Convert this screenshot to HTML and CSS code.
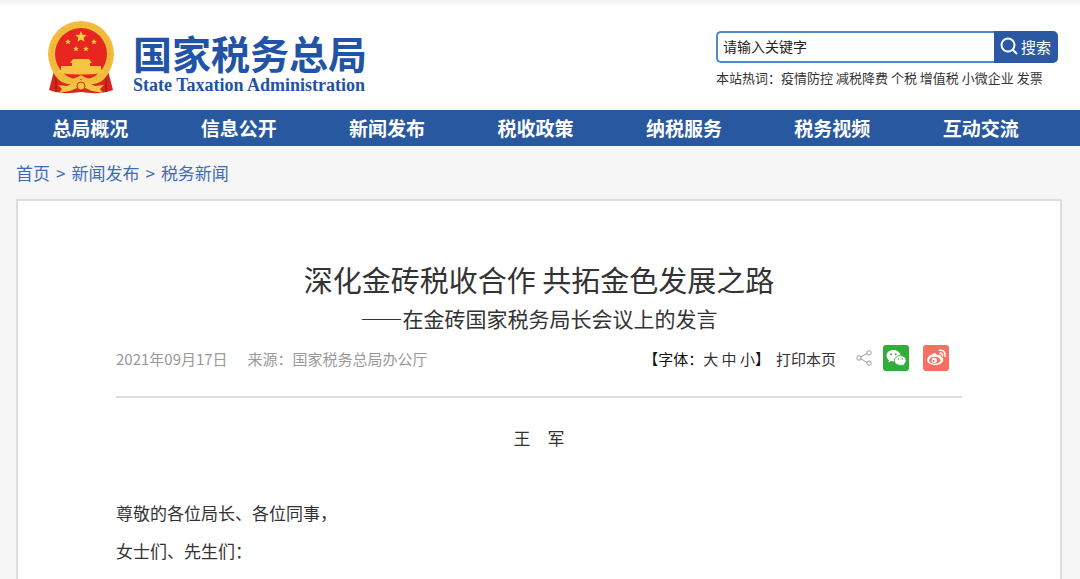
FILE: index.html
```html
<!DOCTYPE html>
<html lang="zh-CN">
<head>
<meta charset="utf-8">
<meta name="viewport" content="width=device-width, initial-scale=1">
<title>深化金砖税收合作 共拓金色发展之路</title>
<link rel="stylesheet" href="styles.css">
</head>
<body>
<header class="header">
  <a class="brand" href="#">
    <svg class="emblem" viewBox="0 0 68 74" aria-hidden="true">
      <path d="M8 46 L2 69 Q14 74 34 71 Q54 74 66 69 L60 46z" fill="#d9231c"/>
      <path d="M9 56 L9 71 M59 56 L59 71" stroke="#b81c15" stroke-width="2"/>
      <circle cx="34" cy="33" r="33" fill="#f2bd3b"/>
      <circle cx="34" cy="33" r="29" fill="none" stroke="#e6ab31" stroke-width="1" stroke-dasharray="2 2"/>
      <circle cx="34" cy="33" r="26" fill="#e6261f"/>
      <path d="M34 10l1.600 3.800 4.100.3-3.100 2.700 1 4-3.600-2.200-3.600 2.200 1-4-3.100-2.700 4.100-.3z" fill="#f8cf45"/>
      <g fill="#f8cf45"><path id="s" d="M21 18l.8 1.800 2 .2-1.500 1.300.5 2-1.800-1-1.800 1 .5-2-1.500-1.300 2-.2z"/><use href="#s" x="26"/><use href="#s" x="8" y="7"/><use href="#s" x="18" y="7"/></g>
      <path d="M26 38h16l3 4h-2v3h11v4h3v3q-23 3-46 0v-3h3v-4h11v-3h-2z" fill="#f6c544"/>
      <path d="M9 54Q10 73 34 70Q58 73 59 54Q50 64 34 66Q18 64 9 54z" fill="#dc281f"/>
      <path d="M4 46Q9 54 20 58q7 1 14-4 7 5 14 4 11-4 16-12-5 15-17 17-7 0-13-5-6 5-13 5Q9 61 4 46z" fill="#f2bd3b"/>
      <path d="M11 64l9 1 6-3q8-4 16 0l6 3 9-1-4 4 3 4-11-2-7-3q-4-3-8 0l-7 3-11 2 3-4z" fill="#f6c544"/>
      <circle cx="34" cy="65" r="4" fill="#f6c544" stroke="#d9231c"/>
    </svg>
    <span class="brand-text">
      <span class="brand-cn">国家税务总局</span>
      <span class="brand-en">State Taxation Administration</span>
    </span>
  </a>
  <div class="search">
    <form class="search-form">
      <input class="search-input" type="text" value="请输入关键字" aria-label="请输入关键字">
      <button class="search-button" type="button">
        <svg class="search-icon" viewBox="0 0 18 18" aria-hidden="true"><circle cx="8" cy="8" r="6.500"/><path d="M12.500 12.500L17 17"/></svg>
        <span>搜索</span>
      </button>
    </form>
    <p class="hot">本站热词：<a href="#">疫情防控</a> <a href="#">减税降费</a> <a href="#">个税</a> <a href="#">增值税</a> <a href="#">小微企业</a> <a href="#">发票</a></p>
  </div>
</header>
<nav class="nav">
  <a href="#">总局概况</a>
  <a href="#">信息公开</a>
  <a href="#">新闻发布</a>
  <a href="#">税收政策</a>
  <a href="#">纳税服务</a>
  <a href="#">税务视频</a>
  <a href="#">互动交流</a>
</nav>
<div class="crumbs"><a href="#">首页</a><span>&gt;</span><a href="#">新闻发布</a><span>&gt;</span><a href="#">税务新闻</a></div>
<main class="card">
  <h1 class="title">深化金砖税收合作 共拓金色发展之路</h1>
  <h2 class="subtitle">——在金砖国家税务局长会议上的发言</h2>
  <div class="meta">
    <div class="source"><span>2021年09月17日</span><span>来源：国家税务总局办公厅</span></div>
    <div class="tools">
      <div class="sizes"><span class="sizes-label">【字体：</span><a href="#">大</a> <a href="#">中</a> <a href="#">小</a><span class="sizes-label">】</span></div>
      <a class="print" href="#">打印本页</a>
      <div class="share">
        <svg class="share-icon" viewBox="0 0 16 16" aria-hidden="true"><path d="M4.500 7L11 3.500M4.500 8.500L11 12.500"/><circle cx="3" cy="8" r="2.200"/><circle cx="13" cy="2.900" r="2.200"/><circle cx="13" cy="13.100" r="2.200"/></svg>
        <a class="share-link" href="#" aria-label="微信">
          <svg viewBox="0 0 26 26" aria-hidden="true"><rect width="26" height="26" rx="3" fill="#2fae3a"/><path d="M10.500 5C6.300 5 3.500 7.600 3.500 10.700c0 1.800 1 3.400 2.500 4.400l-.7 2.300 2.700-1.400c.8.200 1.600.4 2.500.4 4.100 0 7-2.600 7-5.700S14.600 5 10.500 5z" fill="#fff"/><path d="M17.300 10.600c-3.400 0-5.900 2.200-5.900 4.900s2.500 4.900 5.900 4.900c.7 0 1.400-.1 2-.3l2.300 1.200-.6-2c1.300-.9 2.100-2.300 2.100-3.800 0-2.700-2.500-4.900-5.800-4.900z" fill="#fff" stroke="#2fae3a" stroke-width=".8"/><g fill="#2fae3a"><circle cx="8.200" cy="9.200" r="1"/><circle cx="12.700" cy="9.200" r="1"/><circle cx="15.400" cy="14" r=".8"/><circle cx="19.200" cy="14" r=".8"/></g></svg>
        </a>
        <a class="share-link" href="#" aria-label="微博">
          <svg viewBox="0 0 26 26" aria-hidden="true"><rect width="26" height="26" rx="3" fill="#f56f62"/><path d="M11.500 8.300c1.300-.3 2.200.3 1.900 2 2-.8 4.700-.8 4.300 1.500 1.400.5 2.600 1.300 2.600 2.900 0 2.900-3.800 5.300-8.400 5.300S4 18 4 15.100c0-2.800 4-6.200 7.500-6.800z" fill="#fff"/><ellipse cx="11.800" cy="15.200" rx="5.700" ry="3.500" fill="#f56f62"/><circle cx="11.300" cy="15.400" r="2.700" fill="#fff"/><circle cx="10.600" cy="16" r="1.100" fill="#f56f62"/><path d="M16.500 5.300c3.900-.7 6.600 2.300 5.500 6M17 8.200c1.700-.2 2.900 1 2.500 2.700" fill="none" stroke="#fff" stroke-width="1.600" stroke-linecap="round"/></svg>
        </a>
      </div>
    </div>
  </div>
  <article class="article">
    <p class="author">王　军</p>
    <p>尊敬的各位局长、各位同事，</p>
    <p>女士们、先生们：</p>
  </article>
</main>
</body>
</html>
```
FILE: styles.css
```css
* {
  box-sizing: border-box;
}

body {
  display: flex;
  flex-direction: column;
  min-height: 100vh;
  margin: 0;
  background: #f6f6f6;
  color: #333;
  font-family: "Noto Sans CJK SC", "Liberation Sans", sans-serif;
  font-size: 15px;
}

a {
  color: inherit;
  text-decoration: none;
}

p,
h1,
h2 {
  margin: 0;
  font-weight: 400;
}

.header {
  display: flex;
  justify-content: space-between;
  align-items: flex-start;
  height: 110px;
  padding: 21px 22px 0 47px;
  background: linear-gradient(#f1f1f1, #fff 7px);
}

.brand {
  display: flex;
  gap: 18px;
  color: #2153a6;
}

.emblem {
  width: 68px;
  height: 74px;
}

.brand-text {
  display: flex;
  flex-direction: column;
  padding-top: 8px;
}

.brand-cn {
  font-size: 39px;
  font-weight: 700;
  line-height: 46px;
}

.brand-en {
  font-family: "Liberation Serif", serif;
  font-size: 18px;
  font-weight: 700;
  line-height: 20px;
}

.search {
  width: 342px;
  padding-top: 10px;
}

.search-form {
  display: flex;
  height: 32px;
}

.search-input {
  flex: 1;
  min-width: 0;
  padding: 0 5px 2px;
  border: 2px solid #4e8ac6;
  border-right: 0;
  border-radius: 5px 0 0 5px;
  background: #fff;
  color: #222;
  font: inherit;
  font-size: 14px;
}

.search-button {
  display: flex;
  align-items: center;
  gap: 3px;
  width: 64px;
  padding: 0 6px 2px;
  border: 0;
  border-radius: 0 5px 5px 0;
  background: #2a58a2;
  color: #fff;
  font: inherit;
  white-space: nowrap;
}

.search-icon {
  flex: none;
  width: 18px;
  height: 18px;
  fill: none;
  stroke: #fff;
  stroke-width: 2;
}

.hot {
  margin-top: 5px;
  font-size: 13px;
  line-height: 20px;
  white-space: nowrap;
}

.nav {
  display: flex;
  padding: 0 25px 0 16px;
  background: #2858a0;
  color: #fff;
  font-size: 19px;
  font-weight: 700;
  line-height: 36px;
  text-align: center;
}

.nav a {
  flex: 1;
}

.crumbs {
  display: flex;
  gap: 6px;
  padding: 13px 16px 12px;
  color: #3e6db5;
  font-size: 17px;
  line-height: 28px;
}

.card {
  flex: 1;
  margin: 0 18px 0 16px;
  padding: 58px 98px 0;
  border: 2px solid #ddd;
  border-bottom: 0;
  background: #fff;
}

.title {
  font-size: 29px;
  line-height: 40px;
  text-align: center;
}

.subtitle {
  font-size: 21px;
  line-height: 38px;
  text-align: center;
}

.meta {
  display: flex;
  justify-content: space-between;
  align-items: center;
  height: 61px;
  padding: 0 13px 17px 0;
  border-bottom: 2px solid #ddd;
}

.source {
  display: flex;
  gap: 20px;
  color: #999;
}

.tools,
.share {
  display: flex;
  align-items: center;
}

.sizes-label {
  color: #111;
}

.print {
  margin-left: 6px;
}

.share {
  margin-left: 20px;
}

.share-icon {
  width: 16px;
  height: 16px;
  margin-right: 11px;
  fill: none;
  stroke: #999;
  stroke-width: 1;
}

.share-link {
  display: flex;
  width: 26px;
  height: 26px;
}

.share-link + .share-link {
  margin-left: 14px;
}

.article {
  padding-top: 21px;
  font-size: 17px;
  line-height: 38px;
}

.author {
  margin-bottom: 37px;
  text-align: center;
}
```
